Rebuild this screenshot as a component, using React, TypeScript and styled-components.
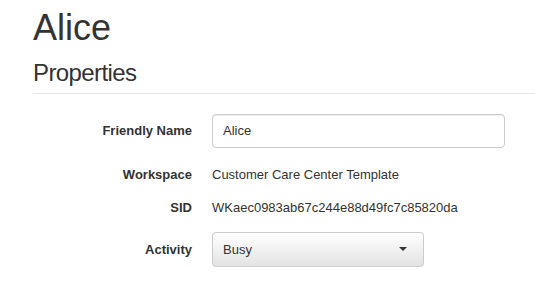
import React from "react";
import styled, { createGlobalStyle } from "styled-components";

const GlobalStyle = createGlobalStyle`
  html, body {
    margin: 0;
    padding: 0;
    background: #fff;
  }
  body {
    font-family: "Liberation Sans", Arial, Helvetica, sans-serif;
    font-size: 13px;
    color: #333;
  }
`;

const Page = styled.div`
  padding: 8px 0 0 33px;
`;

const Title = styled.h1`
  margin: 0;
  font-size: 36px;
  font-weight: 400;
  line-height: 1.1;
  color: #333;
`;

const SectionHeader = styled.div`
  margin-top: 12px;
  padding-bottom: 7px;
  border-bottom: 1px solid #e5e5e5;
`;

const SectionTitle = styled.h3`
  margin: 0;
  font-size: 24px;
  font-weight: 400;
  line-height: 1.1;
  letter-spacing: -0.6px;
  color: #333;
`;

const Form = styled.div`
  display: flex;
  flex-direction: column;
  padding-top: 20px;
`;

const Row = styled.div<{ $top?: number }>`
  display: grid;
  grid-template-columns: 159px 1fr;
  column-gap: 20px;
  align-items: center;
  margin-top: ${({ $top }) => $top ?? 0}px;
`;

const Label = styled.label`
  text-align: right;
  font-weight: 700;
  font-size: 13px;
  color: #333;
`;

const Value = styled.div`
  line-height: 20px;
  font-size: 13px;
  color: #333;
`;

const TextInput = styled.input`
  box-sizing: border-box;
  width: 293px;
  height: 34px;
  padding: 6px 10px;
  font-family: inherit;
  font-size: 13px;
  color: #333;
  background: #fff;
  border: 1px solid #ccc;
  border-radius: 4px;
  box-shadow: inset 0 1px 1px rgba(0, 0, 0, 0.075);
  outline: none;
`;

const SelectButton = styled.button`
  box-sizing: border-box;
  width: 212px;
  height: 35px;
  display: flex;
  align-items: center;
  justify-content: space-between;
  padding: 0 16px 0 10px;
  font-family: inherit;
  font-size: 13px;
  color: #333;
  background: linear-gradient(to bottom, #fff 0%, #e3e3e3 100%);
  border: 1px solid #ccc;
  border-radius: 4px;
  box-shadow: 0 1px 1px rgba(0, 0, 0, 0.075);
`;

const Caret = styled.span`
  width: 0;
  height: 0;
  border-left: 4px solid transparent;
  border-right: 4px solid transparent;
  border-top: 4px solid #333;
`;

export default function App() {
  return (
    <>
      <GlobalStyle />
      <Page>
        <Title>Alice</Title>
        <SectionHeader>
          <SectionTitle>Properties</SectionTitle>
        </SectionHeader>
        <Form>
          <Row>
            <Label>Friendly Name</Label>
            <TextInput defaultValue="Alice" />
          </Row>
          <Row $top={17}>
            <Label>Workspace</Label>
            <Value>Customer Care Center Template</Value>
          </Row>
          <Row $top={13}>
            <Label>SID</Label>
            <Value>WKaec0983ab67c244e88d49fc7c85820da</Value>
          </Row>
          <Row $top={14}>
            <Label>Activity</Label>
            <SelectButton>
              <span>Busy</span>
              <Caret />
            </SelectButton>
          </Row>
        </Form>
      </Page>
    </>
  );
}
